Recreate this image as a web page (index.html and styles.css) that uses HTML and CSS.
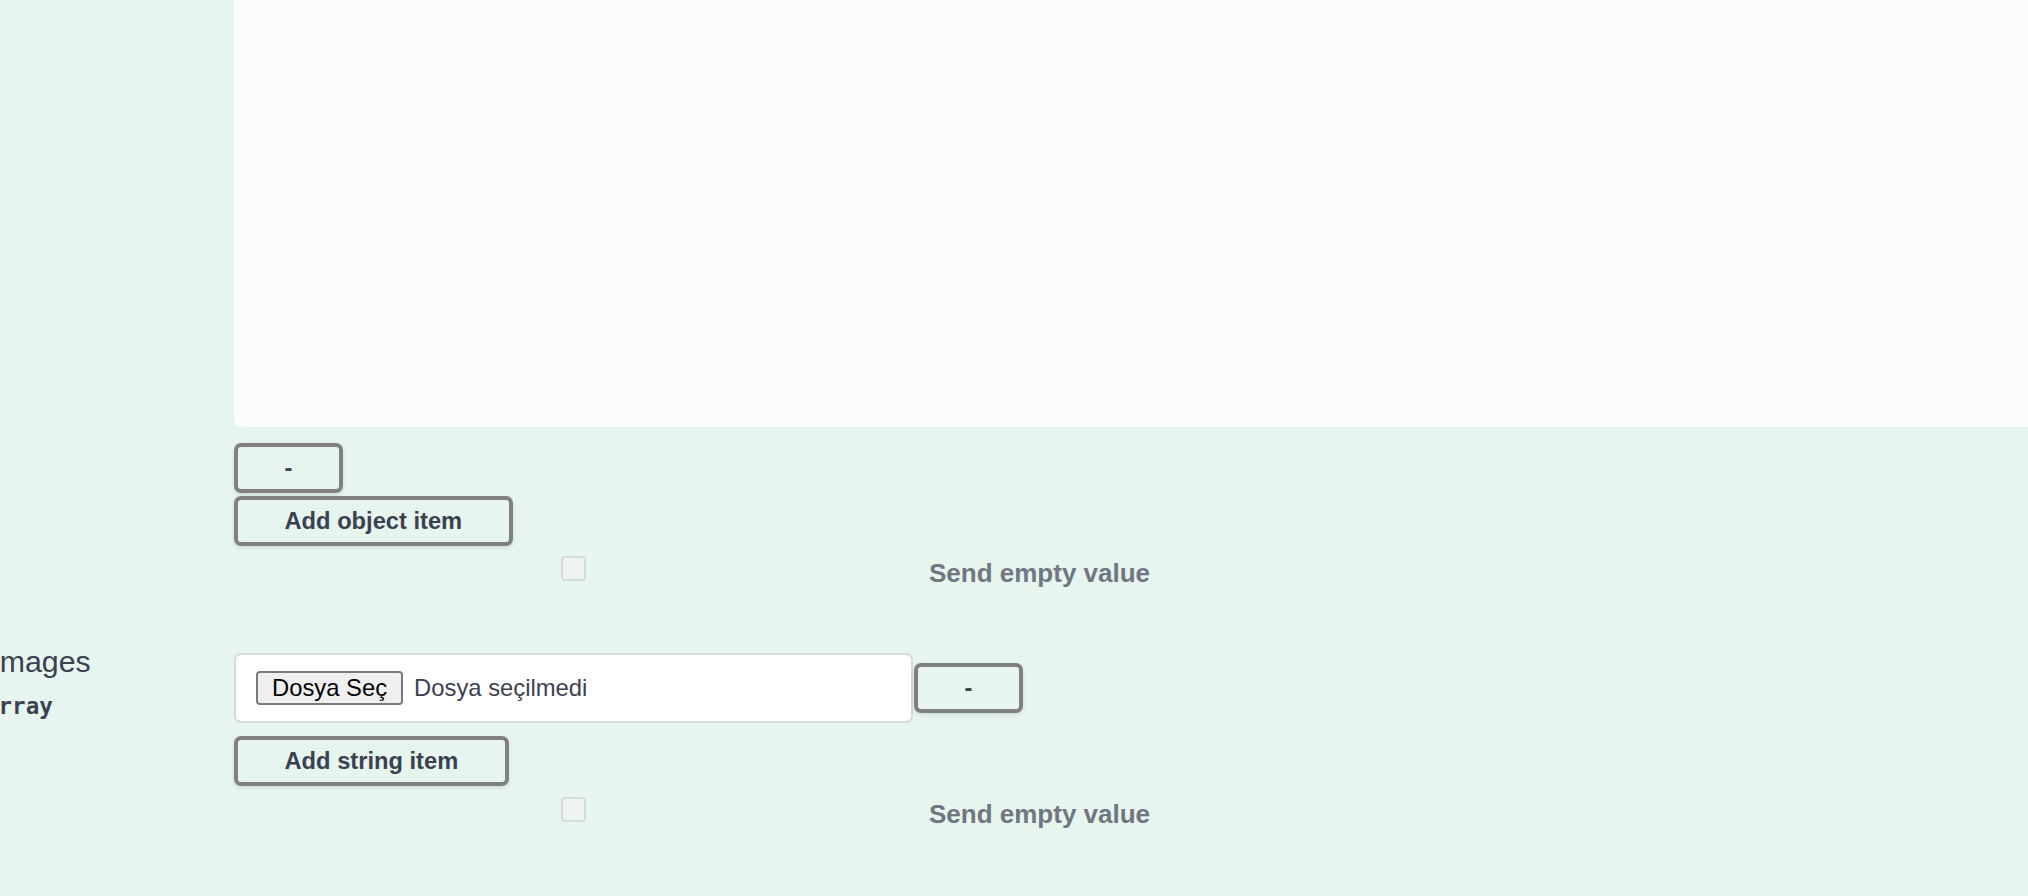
FILE: index.html
```html
<!DOCTYPE html>
<html lang="tr">
<head>
<meta charset="utf-8">
<title>Parameters</title>
<link rel="stylesheet" href="styles.css">
</head>
<body>
<div class="params">
  <div class="param-row">
    <div class="col-name"></div>
    <div class="col-desc">
      <div class="body-text"></div>
      <button class="btn btn-remove first-remove">-</button>
      <button class="btn btn-add object-add">Add object item</button>
      <div class="empty-toggle">
        <div class="toggle-box"><input type="checkbox" class="checkbox"></div>
        <span class="toggle-label">Send empty value</span>
      </div>
    </div>
  </div>
  <div class="param-row second">
    <div class="col-name">
      <div class="param-name">images</div>
      <div class="param-type">array</div>
    </div>
    <div class="col-desc">
      <div class="array-item">
        <div class="file-input">
          <span class="file-btn">Dosya Seç</span>
          <span class="file-status">Dosya seçilmedi</span>
        </div>
        <button class="btn btn-remove item-remove">-</button>
      </div>
      <button class="btn btn-add string-add">Add string item</button>
      <div class="empty-toggle lower">
        <div class="toggle-box"><input type="checkbox" class="checkbox"></div>
        <span class="toggle-label">Send empty value</span>
      </div>
    </div>
  </div>
</div>
</body>
</html>
```
FILE: styles.css
```css
html, body {
  margin: 0;
  padding: 0;
}

body {
  width: 2028px;
  height: 896px;
  overflow: hidden;
  background: #e6f5ee;
  font-family: "Liberation Sans", Arial, sans-serif;
  color: #3b4151;
}

.param-row {
  display: flex;
  align-items: flex-start;
}

.param-row.second {
  margin-top: 56px;
}

.col-name {
  width: 234px;
  flex: none;
}

.col-desc {
  flex: 1;
  min-width: 0;
  display: flex;
  flex-direction: column;
  align-items: flex-start;
}

.body-text {
  align-self: stretch;
  height: 427px;
  background: #fafdfc;
  border-radius: 0 0 0 7px;
}

.btn {
  font: 700 23.7px/28px "Liberation Sans", Arial, sans-serif;
  color: #3b4151;
  background: transparent;
  border: 4px solid #808080;
  border-radius: 7px;
  padding: 7px 46.5px;
  margin: 0;
  box-shadow: 0 2px 4px rgba(0, 0, 0, 0.1);
  cursor: pointer;
}

.first-remove {
  margin-top: 16px;
}

.object-add {
  margin-top: 3px;
}

.empty-toggle {
  display: flex;
  align-items: flex-start;
  margin-top: 10px;
}

.empty-toggle.lower {
  margin-top: 11px;
}

.toggle-box {
  width: 679px;
  display: flex;
  justify-content: center;
}

.checkbox {
  appearance: none;
  -webkit-appearance: none;
  margin: 0;
  width: 25px;
  height: 25px;
  box-sizing: border-box;
  border: 2px solid #d5dcd8;
  border-radius: 4px;
  background: #eef4f1;
}

.toggle-label {
  margin-left: 16px;
  margin-top: 2px;
  font: 700 26px/30px "Liberation Sans", Arial, sans-serif;
  color: #6f7782;
  white-space: nowrap;
}

.param-name {
  font: 400 30.3px/36px "Liberation Sans", Arial, sans-serif;
  color: #3b4151;
  margin-left: -7px;
  white-space: nowrap;
}

.param-type {
  font: 700 22.5px/28px "DejaVu Sans Mono", "Liberation Mono", monospace;
  color: #3b4151;
  margin-top: 12px;
  margin-left: -15px;
  white-space: nowrap;
}

.array-item {
  display: flex;
  align-items: center;
  margin-top: 9px;
}

.file-input {
  width: 679px;
  height: 70px;
  box-sizing: border-box;
  border: 2px solid #d9d9d9;
  border-radius: 7px;
  background: #ffffff;
  padding: 0 20px;
  display: flex;
  align-items: center;
}

.file-btn {
  height: 34px;
  box-sizing: border-box;
  display: flex;
  align-items: center;
  padding: 0 14px;
  border: 2px solid #7a7a7a;
  border-radius: 4px;
  background: #efefef;
  color: #000000;
  font: 400 23.8px/1 "Liberation Sans", Arial, sans-serif;
  white-space: nowrap;
}

.file-status {
  margin-left: 11px;
  font: 400 23.8px/1 "Liberation Sans", Arial, sans-serif;
  color: #3b4151;
  white-space: nowrap;
}

.item-remove {
  margin-left: 1px;
}

.string-add {
  margin-top: 13px;
}
```
